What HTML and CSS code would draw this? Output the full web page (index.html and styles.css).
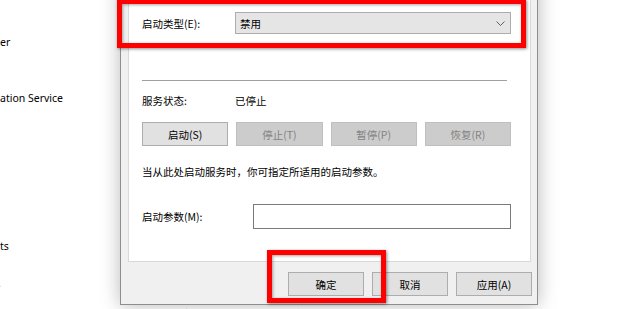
FILE: index.html
```html
<!DOCTYPE html>
<html lang="zh-CN">
<head>
  <meta charset="UTF-8" />
  <title>服务属性</title>
  <link rel="stylesheet" href="styles.css">
</head>
<body>
  <div class="desktop">
    <div class="service-list">
      <div class="row">er</div>
      <div class="row"></div>
      <div class="row"></div>
      <div class="row">ation Service</div>
      <div class="row"></div>
      <div class="row"></div>
      <div class="row"></div>
      <div class="row"></div>
      <div class="row"></div>
      <div class="row"></div>
      <div class="row"></div>
      <div class="row">ts</div>
      <div class="row"></div>
      <div class="row"><span class="cut">.</span></div>
      <div class="row row-cols">
        <span>正在运行</span><span>手动触发</span><span>本地系统</span>
      </div>
    </div>

    <div class="window">
      <div class="tab-page">
        <div class="field">
          <span class="label label-type">启动类型(E):</span>
          <div class="combo">
            <span>禁用</span>
            <svg class="chevron" width="9" height="5" viewBox="0 0 9 5">
              <polyline points="0.5,0.5 4.5,4.5 8.5,0.5" fill="none" stroke="#606060" stroke-width="1"/>
            </svg>
          </div>
        </div>

        <div class="separator"></div>

        <div class="field status">
          <span class="label label-type">服务状态:</span>
          <span>已停止</span>
        </div>

        <div class="actions">
          <button class="btn">启动(S)</button>
          <button class="btn" disabled>停止(T)</button>
          <button class="btn" disabled>暂停(P)</button>
          <button class="btn" disabled>恢复(R)</button>
        </div>

        <p class="hint">当从此处启动服务时，你可指定所适用的启动参数。</p>

        <div class="field params">
          <span class="label label-param">启动参数(M):</span>
          <div class="input"></div>
        </div>
      </div>

      <div class="footer">
        <button class="btn btn-footer">确定</button>
        <button class="btn btn-footer">取消</button>
        <button class="btn btn-footer">应用(A)</button>
      </div>
    </div>

    <div class="mark mark-type"></div>
    <div class="mark mark-ok"></div>
  </div>
</body>
</html>
```

FILE: styles.css
```css
body {
  margin: 0;
  background: #fff;
  font-family: "Microsoft YaHei UI", "Noto Sans CJK SC", sans-serif;
  font-size: 10.5px;
  color: #000;
}

.desktop {
  position: relative;
  width: 620px;
  height: 309px;
  overflow: hidden;
  background: #fff;
}

/* services list behind the dialog */
.service-list {
  padding-top: 33px;
  font-family: "Segoe UI", "Noto Sans", sans-serif;
  font-size: 10.5px;
}

.row {
  height: 18.5px;
  line-height: 18.5px;
  white-space: nowrap;
}

.cut {
  color: #3c6ea8;
  margin-left: -2px;
}

.row-cols {
  display: flex;
  gap: 14px;
  padding-left: 152px;
  padding-top: 13px;
  font-family: "Noto Sans CJK SC", sans-serif;
  color: #333;
}

/* dialog window */
.window {
  position: absolute;
  left: 120px;
  top: -40px;
  width: 418px;
  box-sizing: border-box;
  background: #f0f0f0;
  border: 1px solid #8e8e8e;
  padding: 10px 5px 8px 7px;
  box-shadow: 0 0 18px rgba(0, 0, 0, 0.28);
}

.tab-page {
  background: #fff;
  border: 1px solid #d9d9d9;
  margin-right: 1px;
  padding: 40px 19px 32px 13px;
}

.field {
  display: flex;
  align-items: center;
}

.label-type {
  width: 93px;
  flex-shrink: 0;
}

.label-param {
  width: 111px;
  flex-shrink: 0;
}

.combo {
  flex: 1;
  height: 22px;
  box-sizing: border-box;
  background: #e5e5e5;
  border: 1px solid #adadad;
  display: flex;
  align-items: center;
  justify-content: space-between;
  padding: 0 5px 0 4px;
}

.chevron {
  display: block;
}

.separator {
  height: 1px;
  background: #a0a0a0;
  margin: 46px 4px 0 0;
}

.status {
  height: 16px;
  margin-top: 11px;
}

.actions {
  display: grid;
  grid-template-columns: repeat(4, 1fr);
  gap: 8px;
  margin-top: 14px;
}

.btn {
  font-family: inherit;
  font-size: 10.5px;
  height: 24px;
  padding: 0;
  background: #e1e1e1;
  border: 1px solid #adadad;
  color: #000;
}

.btn:disabled {
  background: #cccccc;
  border-color: #bfbfbf;
  color: #838383;
}

.hint {
  margin: 18px 0 0;
  line-height: 16px;
}

.params {
  margin-top: 24px;
}

.input {
  flex: 1;
  height: 25px;
  box-sizing: border-box;
  background: #fff;
  border: 1px solid #7a7a7a;
}

.footer {
  display: flex;
  justify-content: flex-end;
  gap: 8px;
  margin-top: 10px;
}

.btn-footer {
  width: 76px;
}

/* red highlight frames drawn over the screenshot */
.mark {
  position: absolute;
  box-sizing: border-box;
  border: 5px solid #ff0000;
  box-shadow: 1px 1px 3px rgba(0, 0, 0, 0.45), inset 1px 1px 3px rgba(0, 0, 0, 0.35);
}

.mark-type {
  left: 117px;
  top: -1px;
  width: 409px;
  height: 49px;
}

.mark-ok {
  left: 267px;
  top: 250px;
  width: 119px;
  height: 53px;
}
```
